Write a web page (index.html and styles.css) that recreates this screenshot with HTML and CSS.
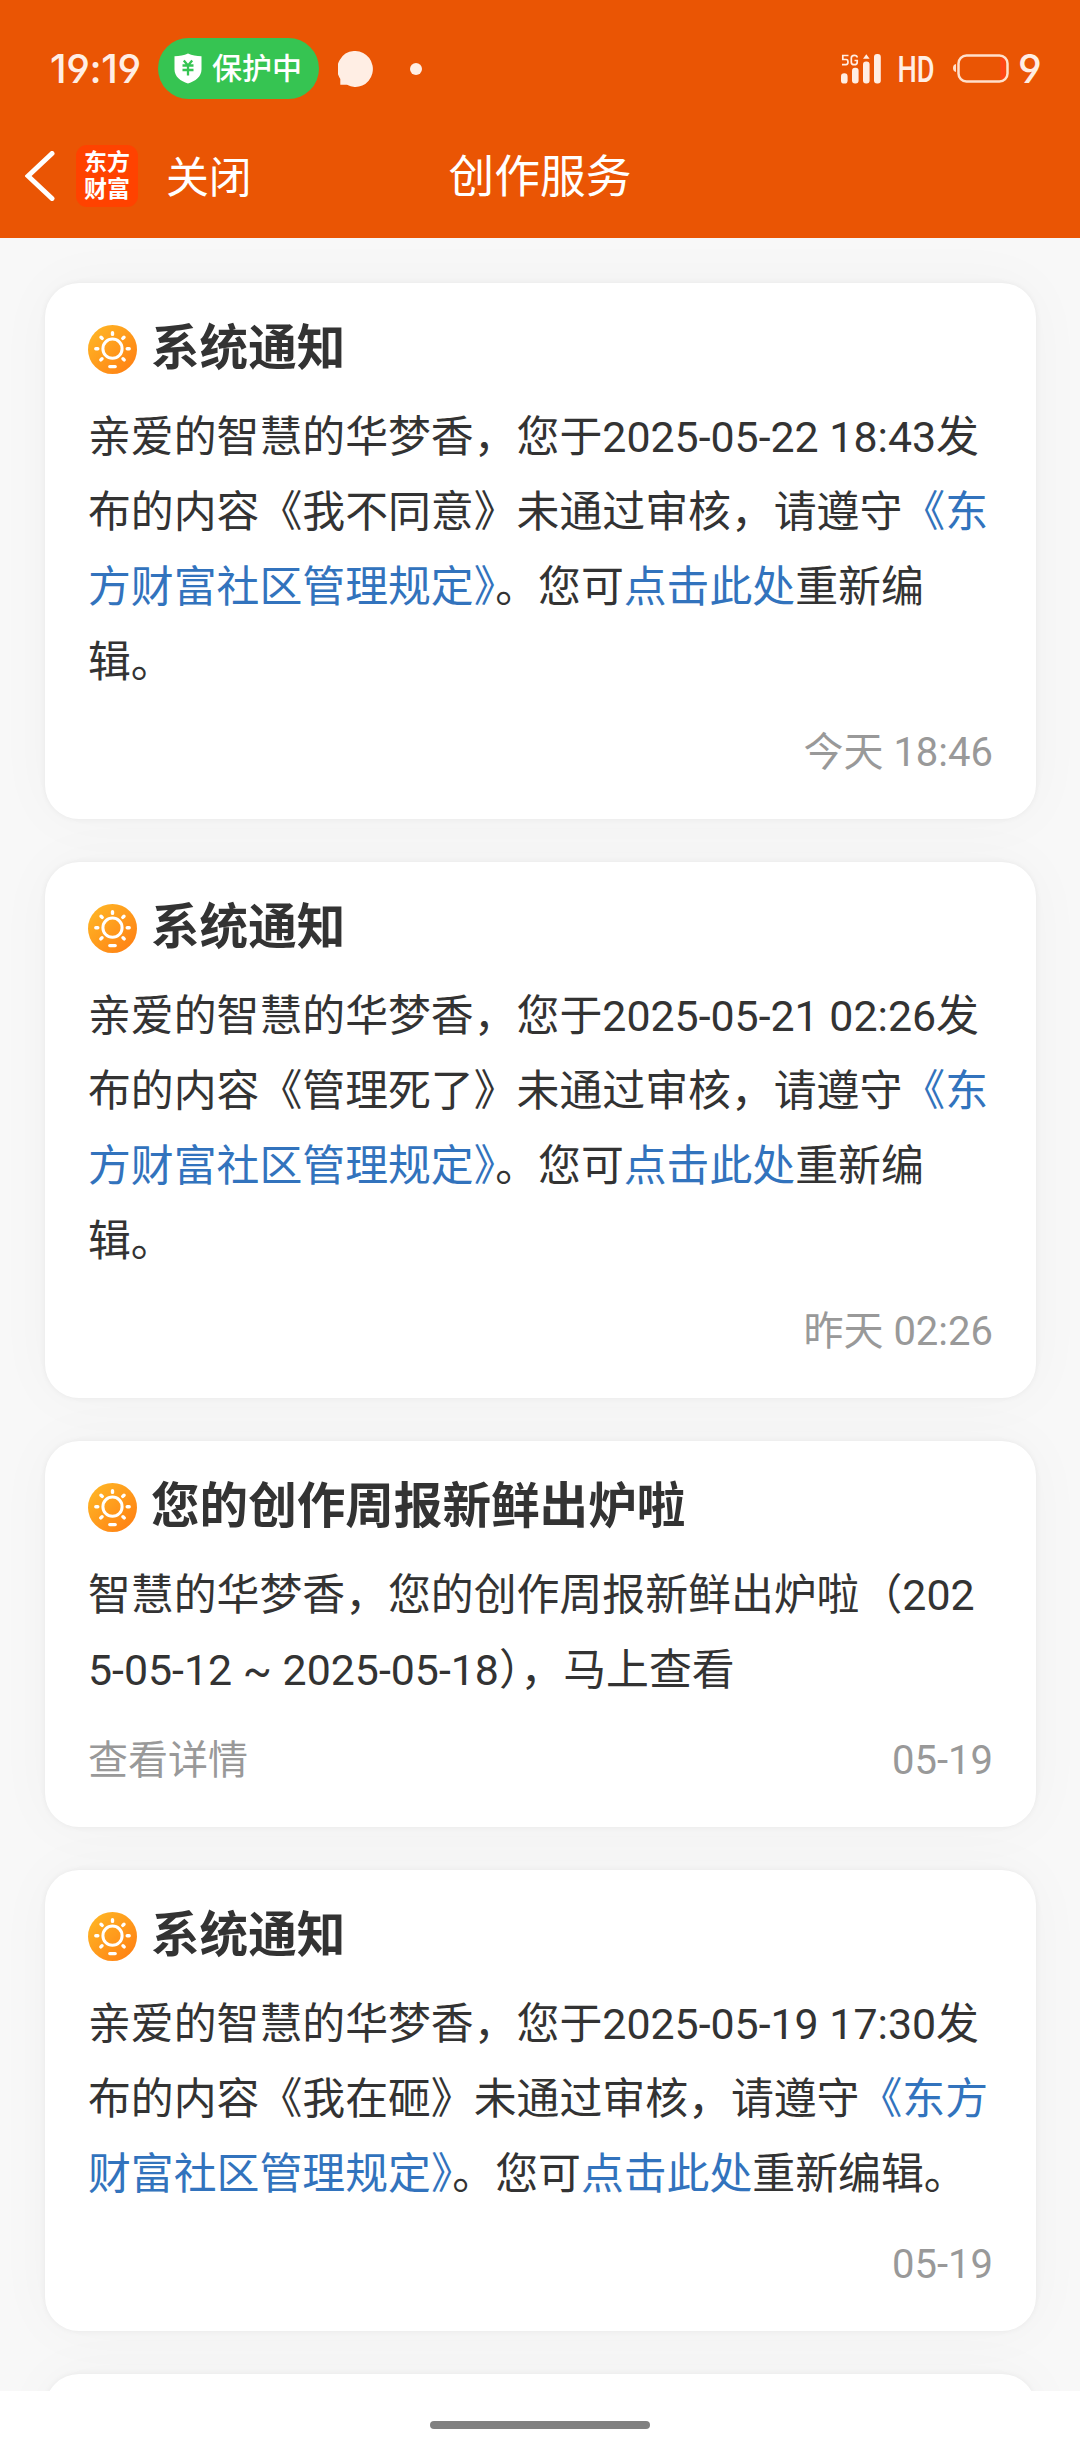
FILE: index.html
```html
<!DOCTYPE html>
<html lang="zh-CN">
<head>
<meta charset="utf-8">
<title>创作服务</title>
<link rel="stylesheet" href="styles.css">
</head>
<body>
<svg class="defs" width="0" height="0" aria-hidden="true">
  <defs>
    <linearGradient id="sun-fill" x1="0" y1="0" x2="1" y2="1">
      <stop offset="0.1" stop-color="#ffb424"/>
      <stop offset="0.9" stop-color="#ff8214"/>
    </linearGradient>
    <symbol id="sun" viewBox="0 0 49 49">
      <circle cx="24.5" cy="24.5" r="24.5" fill="url(#sun-fill)"/>
      <circle cx="24.5" cy="23.7" r="9.6" fill="none" stroke="#fff" stroke-width="3"/>
      <path d="M24.5 7.8v1.6M13 12.2l1.2 1.2M36 12.2l-1.2 1.2M7.8 23.7h2M41.2 23.7h-2M12.8 34.9l1.2-1.2M36.2 34.9l-1.2-1.2M21.8 41.6h5.4" fill="none" stroke="#fff" stroke-width="3.4" stroke-linecap="round"/>
    </symbol>
  </defs>
</svg>
<div class="screen">
  <header class="top">
    <div class="status">
      <div class="status-left">
        <span class="clock">19:19</span>
        <span class="pill">
          <svg width="28" height="31" viewBox="0 0 28 31"><path d="M14 0.5C18 2.3 22.500 3 27.500 3.200V16.500C27.500 23.500 21.500 28.200 14 30.500C6.500 28.200 .5 23.500 .5 16.500V3.200C5.500 3 10 2.300 14 .5Z" fill="#fff"/><path d="M9.800 7.500L14 12.500L18.200 7.500M8.500 12.500H19.500M8.500 17H19.500M14 12.500V22.500" fill="none" stroke="#36c452" stroke-width="2.300"/></svg>
          <span class="pill-text">保护中</span>
        </span>
        <svg class="bubble" width="35" height="36" viewBox="0 0 35 36"><path d="M17.500 0A17.500 18 0 1 1 9 33.800H2.300V28A17.500 18 0 0 1 17.500 0Z" fill="#ffeee4"/></svg>
        <span class="dot"></span>
      </div>
      <div class="status-right">
        <svg class="signal" width="40" height="30" viewBox="0 0 40 30" fill="#ffeee4"><rect x="0" y="19.300" width="6.600" height="10.300" rx="3.200"/><rect x="11" y="13.800" width="6.600" height="15.800" rx="3"/><rect x="22" y="7.500" width="6.600" height="22.100" rx="3"/><rect x="33" y="0" width="6.800" height="29.600" rx="3"/><path d="M22 4.800L25.300 .3L28.600 4.800Z"/><path d="M7.500 1.500H1.800V5.500H5.200Q7 5.500 7 8Q7 10.600 5 10.600H1M16.200 3.500Q16.200 1.300 13.300 1.300Q10.300 1.300 10.300 4V8.200Q10.300 10.700 13.300 10.700Q16.200 10.700 16.200 8.200V6.500H13.500" fill="none" stroke="#ffeee4" stroke-width="1.700"/></svg>
        <svg class="hd" width="38" height="44" viewBox="0 0 38 44" fill="#ffeee4"><text x="0.500" y="35" textLength="37" lengthAdjust="spacingAndGlyphs">HD</text></svg>
        <svg class="battery" width="56" height="29" viewBox="0 0 56 29"><path d="M3 10V18Q0 17.500 0 14T3 10Z" fill="#ffe0cc"/><rect x="47.500" y="4" width="5" height="21" fill="#ff4516"/><rect x="5.500" y="1.500" width="49" height="26" rx="8" fill="none" stroke="#ffe0cc" stroke-width="2.500"/></svg>
        <span class="clock level">9</span>
      </div>
    </div>
    <nav class="nav">
      <div class="nav-left">
        <svg class="back" width="30" height="50" viewBox="0 0 30 50"><path d="M27 2.500L3 25L27 47.500" fill="none" stroke="#fff" stroke-width="5" stroke-linecap="round" stroke-linejoin="miter"/></svg>
        <span class="logo"><span>东方</span><span>财富</span></span>
        <span class="close">关闭</span>
      </div>
      <h1 class="page-title">创作服务</h1>
      <div></div>
    </nav>
  </header>

  <main class="feed">
    <article class="card">
      <h2 class="card-head"><svg class="sun"><use href="#sun"/></svg><span>系统通知</span></h2>
      <p class="body">亲爱的智慧的华梦香，您于2025-05-22 18:43发<br>布的内容《我不同意》未通过审核，请遵守<a>《东</a><br><a>方财富社区管理规定<span class="half">》</span></a>。您可<a>点击此处</a>重新编<br>辑。</p>
      <footer class="foot"><span></span><time>今天 18:46</time></footer>
    </article>
    <article class="card">
      <h2 class="card-head"><svg class="sun"><use href="#sun"/></svg><span>系统通知</span></h2>
      <p class="body">亲爱的智慧的华梦香，您于2025-05-21 02:26发<br>布的内容《管理死了》未通过审核，请遵守<a>《东</a><br><a>方财富社区管理规定<span class="half">》</span></a>。您可<a>点击此处</a>重新编<br>辑。</p>
      <footer class="foot"><span></span><time>昨天 02:26</time></footer>
    </article>
    <article class="card">
      <h2 class="card-head"><svg class="sun"><use href="#sun"/></svg><span>您的创作周报新鲜出炉啦</span></h2>
      <p class="body">智慧的华梦香，您的创作周报新鲜出炉啦（202<br>5-05-12 ~ 2025-05-18<span class="half">）</span>，马上查看</p>
      <footer class="foot"><span>查看详情</span><time>05-19</time></footer>
    </article>
    <article class="card">
      <h2 class="card-head"><svg class="sun"><use href="#sun"/></svg><span>系统通知</span></h2>
      <p class="body">亲爱的智慧的华梦香，您于2025-05-19 17:30发<br>布的内容《我在砸》未通过审核，请遵守<a>《东方</a><br><a>财富社区管理规定<span class="half">》</span></a>。您可<a>点击此处</a>重新编辑。</p>
      <footer class="foot"><span></span><time>05-19</time></footer>
    </article>
    <article class="card card-next"></article>
  </main>
  <div class="home"><span class="home-bar"></span></div>
</div>
</body>
</html>
```
FILE: styles.css
```css
* { box-sizing: border-box; }
body {
  margin: 0;
  font-family: Roboto, "Noto Sans CJK SC", sans-serif;
  color: #333;
  text-spacing-trim: space-all;
}
.defs { display: block; position: absolute; }
.screen {
  width: 1080px;
  height: 2460px;
  display: flex;
  flex-direction: column;
  overflow: hidden;
  background: #f8f8f8;
}
.top {
  flex: none;
  height: 238px;
  background: #ea5504;
  color: #fff;
}
.status {
  height: 137px;
  padding: 0 38px 0 50px;
  display: flex;
  justify-content: space-between;
  align-items: center;
}
.status-left, .status-right { display: flex; align-items: center; }
.clock {
  font: 500 40px/60px Inter, sans-serif;
  font-feature-settings: "ss01";
  color: #ffeee4;
}
.status-left .clock { width: 108px; letter-spacing: -0.400px; white-space: nowrap; }
.level { width: 24px; }
.pill {
  width: 161px;
  height: 61px;
  border-radius: 31px;
  background: #36c452;
  display: flex;
  align-items: center;
  padding-left: 16px;
  gap: 10px;
}
.pill-text { font-size: 30px; font-weight: 500; line-height: 60px; white-space: nowrap; }
.bubble { margin-left: 19px; }
.dot {
  width: 12px;
  height: 12px;
  margin-left: 37px;
  border-radius: 50%;
  background: #ffeee4;
}
.hd { margin-left: 16px; }
.hd text { font: 500 37px Roboto, sans-serif; }
.battery { margin: 0 9px 0 18px; }
.nav {
  height: 78px;
  display: grid;
  grid-template-columns: 1fr auto 1fr;
  align-items: center;
}
.nav-left { display: flex; align-items: center; padding-left: 25px; }
.logo {
  width: 62px;
  height: 62px;
  margin: 0 28px 0 21px;
  border-radius: 11px;
  background: #ff4200;
  display: flex;
  flex-direction: column;
  justify-content: center;
  align-items: center;
  font-size: 23px;
  font-weight: 700;
  line-height: 27px;
}
.close { padding-top: 3px; font-size: 42.860px; line-height: 60px; }
.page-title { margin: 0; padding-top: 3px; font-size: 45.710px; font-weight: 400; line-height: 60px; }
.feed {
  flex: none;
  height: 2153px;
  padding: 45px 44px 0 45px;
  display: flex;
  flex-direction: column;
  gap: 43px;
  overflow: hidden;
}
.card {
  flex: none;
  padding: 31px 43px 36px;
  border-radius: 34px;
  background: #fff;
  box-shadow: 0 0 6px rgba(0, 0, 0, .06), 0 0 60px rgba(0, 0, 0, .03);
}
.card-next { height: 300px; }
.card-head {
  height: 70px;
  margin: 0;
  display: flex;
  align-items: center;
  gap: 14px;
  font-size: 48.570px;
  font-weight: 700;
  line-height: 70px;
}
.sun { width: 49px; height: 49px; }
.body {
  margin: 16px 0 22px;
  font-size: 42.860px;
  line-height: 75px;
  white-space: nowrap;
}
.body a { color: #3273bd; }
.half { font-feature-settings: "halt"; }
.foot {
  height: 61px;
  display: flex;
  justify-content: space-between;
  font-size: 40px;
  line-height: 61px;
  color: #999;
}
.home {
  flex: 1;
  display: flex;
  justify-content: center;
  padding-top: 30px;
  background: #fff;
}
.home-bar {
  width: 220px;
  height: 8px;
  border-radius: 4px;
  background: #808080;
}
```
